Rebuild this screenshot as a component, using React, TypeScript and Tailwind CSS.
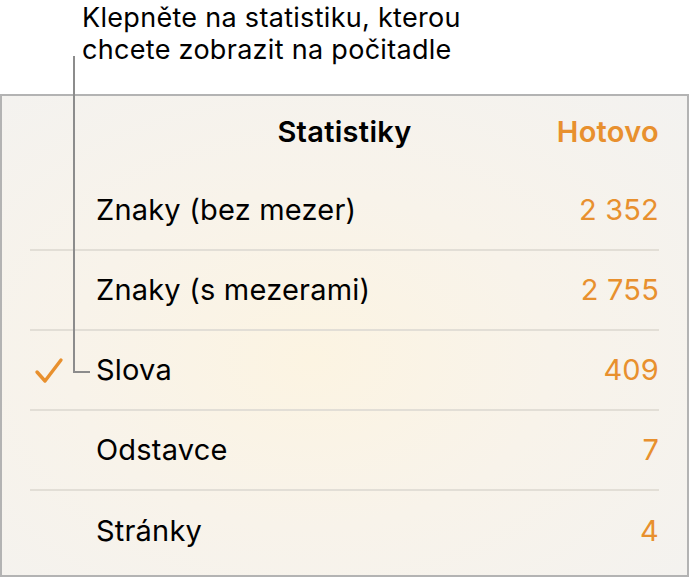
const rows = [
  { label: "Znaky (bez mezer)", value: "2 352" },
  { label: "Znaky (s mezerami)", value: "2 755" },
  { label: "Slova", value: "409", checked: true },
  { label: "Odstavce", value: "7" },
  { label: "Stránky", value: "4" },
];

const App = () => {
  return (
    <div
      className="relative h-[577px] w-[689px] overflow-hidden bg-white text-black"
      style={{ fontFamily: "Inter, Roboto, 'Noto Sans', sans-serif" }}
    >
      <div className="h-[94px] pl-[82px] pt-[2px] text-[27px] leading-[32px] tracking-[0.3px]">
        <p>Klepněte na statistiku, kterou</p>
        <p>chcete zobrazit na počitadle</p>
      </div>

      <div className="h-[483px] border-2 border-[#b3b3b3] bg-[radial-gradient(ellipse_at_45%_55%,#fcf4e2_0%,#f8f3ea_45%,#f3f2f0_100%)]">
        <div className="grid h-[75px] grid-cols-[1fr_auto_1fr] items-center px-[28px] pb-[4px] text-[29px] font-semibold tracking-[0.3px]">
          <span />
          <span>Statistiky</span>
          <span className="justify-self-end text-[#e8902e]">Hotovo</span>
        </div>
        <ul className="mx-[28px]">
          {rows.map((row, i) => (
            <li
              key={row.label}
              className={`relative flex h-[80px] items-center justify-between pl-[66px] text-[29px] tracking-[0.2px] ${
                i < rows.length - 1 ? "border-b-2 border-[#e2ded6]" : ""
              }`}
            >
              {row.checked && (
                <svg
                  className="absolute left-[4px] top-[26px]"
                  width="30"
                  height="28"
                  viewBox="0 0 30 28"
                  fill="none"
                >
                  <path
                    d="M3 15 L11 24 L27 3"
                    stroke="#e8902e"
                    strokeWidth="3.4"
                    strokeLinecap="round"
                    strokeLinejoin="round"
                  />
                </svg>
              )}
              <span>{row.label}</span>
              <span className="text-[#e8902e]">{row.value}</span>
            </li>
          ))}
        </ul>
      </div>

      {/* callout leader */}
      <div className="absolute left-[73px] top-[56px] h-[317px] w-[2px] bg-[#8c8c8c]" />
      <div className="absolute left-[73px] top-[371px] h-[2px] w-[17px] bg-[#8c8c8c]" />
    </div>
  );
};

export default App;
